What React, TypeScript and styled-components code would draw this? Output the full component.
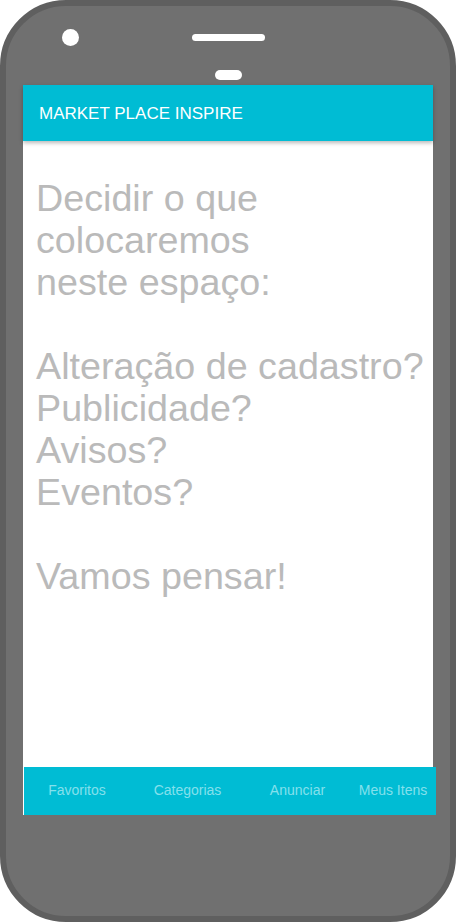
import React from "react";
import styled, { createGlobalStyle } from "styled-components";

const GlobalStyle = createGlobalStyle`
  html, body {
    margin: 0;
    padding: 0;
    background: #ffffff;
  }
  body {
    font-family: "Liberation Sans", Arial, sans-serif;
  }
`;

const Phone = styled.div`
  box-sizing: border-box;
  width: 456px;
  height: 922px;
  border: 6px solid #5f5f5f;
  border-radius: 66px;
  background: #707070;
  display: flex;
  flex-direction: column;
`;

const TopArea = styled.div`
  height: 79px;
  display: grid;
  grid-template-columns: 1fr auto 1fr;
  grid-template-rows: auto auto;
`;

const Camera = styled.div`
  grid-column: 1;
  grid-row: 1 / span 2;
  justify-self: start;
  align-self: start;
  margin-left: 56px;
  margin-top: 23px;
  width: 17px;
  height: 17px;
  border-radius: 50%;
  background: #ffffff;
`;

const Speaker = styled.div`
  grid-column: 2;
  grid-row: 1;
  justify-self: center;
  margin-top: 28px;
  width: 73px;
  height: 7px;
  border-radius: 4px;
  background: #ffffff;
`;

const Sensor = styled.div`
  grid-column: 2;
  grid-row: 2;
  justify-self: center;
  margin-top: 24px;
  width: 27px;
  height: 10px;
  border-radius: 5px;
  background: #ffffff;
`;

const Screen = styled.div`
  margin-left: 17px;
  width: 410px;
  background: #ffffff;
  display: flex;
  flex-direction: column;
`;

const Header = styled.header`
  box-sizing: border-box;
  height: 56px;
  padding-left: 16px;
  background: #00bcd4;
  display: flex;
  align-items: center;
  box-shadow: 0 2px 4px rgba(0, 0, 0, 0.28);
  position: relative;
  z-index: 1;
`;

const Title = styled.h1`
  margin: 0;
  font-size: 17px;
  font-weight: 400;
  color: #ffffff;
  line-height: 1;
  padding-top: 1px;
`;

const Content = styled.main`
  box-sizing: border-box;
  height: 626px;
  padding: 36px 0 0 13px;
`;

const Message = styled.p`
  margin: 0;
  font-size: 37.7px;
  line-height: 42px;
  color: #bababa;
  white-space: nowrap;
`;

const Gap = styled.div`
  height: 42px;
`;

const BottomNav = styled.nav`
  margin-left: 1px;
  width: 412px;
  height: 48px;
  background: #00bcd4;
  display: grid;
  grid-template-columns: 106px 115px 105px 86px;
  align-items: center;
`;

const NavItem = styled.span`
  text-align: center;
  font-size: 14px;
  color: #84e0ec;
  white-space: nowrap;
  padding-bottom: 2px;
`;

export default function App() {
  return (
    <>
      <GlobalStyle />
      <Phone>
        <TopArea>
          <Camera />
          <Speaker />
          <Sensor />
        </TopArea>
        <Screen>
          <Header>
            <Title>MARKET PLACE INSPIRE</Title>
          </Header>
          <Content>
            <Message>
              Decidir o que
              <br />
              colocaremos
              <br />
              neste espaço:
            </Message>
            <Gap />
            <Message>
              Alteração de cadastro?
              <br />
              Publicidade?
              <br />
              Avisos?
              <br />
              Eventos?
            </Message>
            <Gap />
            <Message>Vamos pensar!</Message>
          </Content>
          <BottomNav>
            <NavItem>Favoritos</NavItem>
            <NavItem>Categorias</NavItem>
            <NavItem>Anunciar</NavItem>
            <NavItem>Meus Itens</NavItem>
          </BottomNav>
        </Screen>
      </Phone>
    </>
  );
}
